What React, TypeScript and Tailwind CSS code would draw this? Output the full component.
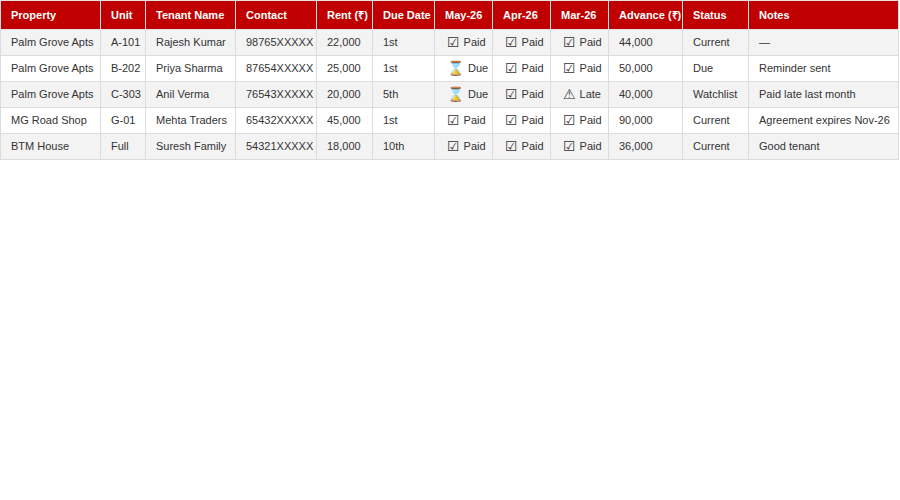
const COLS = [100, 45, 90, 81, 56, 62, 58, 58, 58, 74, 66, 150];
const HEAD = ["Property", "Unit", "Tenant Name", "Contact", "Rent (₹)", "Due Date", "May-26", "Apr-26", "Mar-26", "Advance (₹)", "Status", "Notes"];

const ROWS = [
  ["Palm Grove Apts", "A-101", "Rajesh Kumar", "98765XXXXX", "22,000", "1st", "P", "P", "P", "44,000", "Current", "—"],
  ["Palm Grove Apts", "B-202", "Priya Sharma", "87654XXXXX", "25,000", "1st", "D", "P", "P", "50,000", "Due", "Reminder sent"],
  ["Palm Grove Apts", "C-303", "Anil Verma", "76543XXXXX", "20,000", "5th", "D", "P", "L", "40,000", "Watchlist", "Paid late last month"],
  ["MG Road Shop", "G-01", "Mehta Traders", "65432XXXXX", "45,000", "1st", "P", "P", "P", "90,000", "Current", "Agreement expires Nov-26"],
  ["BTM House", "Full", "Suresh Family", "54321XXXXX", "18,000", "10th", "P", "P", "P", "36,000", "Current", "Good tenant"],
];

function Pay({ s }: { s: string }) {
  const icon = s === "P" ? "☑" : s === "D" ? "⌛" : "⚠";
  const label = s === "P" ? "Paid" : s === "D" ? "Due" : "Late";
  return (
    <span className="inline-flex items-center gap-1">
      <span className="text-[14px] leading-none text-[#333]" style={{ fontFamily: "'DejaVu Sans', sans-serif" }}>{icon}</span>
      {label}
    </span>
  );
}

export default function App() {
  return (
    <div className="w-[900px] h-[500px] bg-white" style={{ fontFamily: "'Liberation Sans', Arial, sans-serif" }}>
      <table className="table-fixed border-collapse text-[11px] text-[#333]" style={{ width: 899 }}>
        <colgroup>
          {COLS.map((w, i) => <col key={i} style={{ width: w }} />)}
        </colgroup>
        <thead>
          <tr className="bg-[#c00000] text-white h-[29px]">
            {HEAD.map((h) => (
              <th key={h} className="text-left font-bold px-[10px] border border-[#e0e0e0] whitespace-nowrap">{h}</th>
            ))}
          </tr>
        </thead>
        <tbody>
          {ROWS.map((r, i) => (
            <tr key={i} className={`h-[26px] ${i % 2 === 0 ? "bg-[#f3f3f3]" : "bg-white"}`}>
              {r.map((c, j) => (
                <td key={j} className={`border border-[#dcdcdc] whitespace-nowrap ${j >= 6 && j <= 8 ? "px-[12px]" : "px-[10px]"}`}>
                  {j >= 6 && j <= 8 ? <Pay s={c} /> : c}
                </td>
              ))}
            </tr>
          ))}
        </tbody>
      </table>
    </div>
  );
}
